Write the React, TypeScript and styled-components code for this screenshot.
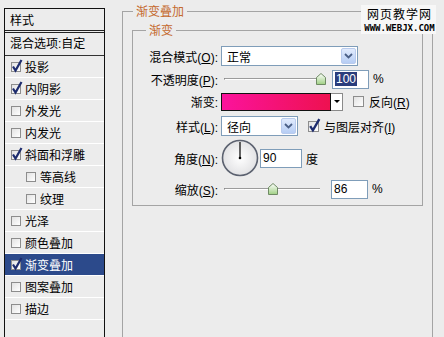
import React from "react";
import styled, { createGlobalStyle } from "styled-components";

const GlobalStyle = createGlobalStyle`
  html, body {
    margin: 0;
    padding: 0;
    background: #ececec;
  }
  body {
    width: 444px;
    height: 337px;
    overflow: hidden;
    font-family: "Liberation Sans", "Noto Sans CJK SC", sans-serif;
    font-size: 12px;
    color: #000;
  }
  * {
    box-sizing: border-box;
  }
`;

const Dialog = styled.div`
  position: relative;
  display: flex;
  align-items: flex-start;
  width: 444px;
  height: 337px;
  background: #ececec;
  overflow: hidden;
`;

/* ---------- left style list ---------- */

const StyleList = styled.div`
  margin: 8px 0 0 4px;
  width: 101px;
  height: 340px;
  border: 1px solid #111;
  border-bottom: none;
  display: flex;
  flex-direction: column;
  flex-shrink: 0;
`;

const ListTitle = styled.div`
  height: 24px;
  padding: 4px 0 0 5px;
  line-height: 17px;
  border-bottom: 3px double #222;
`;

const BlendRow = styled.div`
  height: 23px;
  line-height: 22px;
  padding-left: 5px;
  border-bottom: 1px solid #333;
`;

const ListRow = styled.div<{ $indent?: boolean; $active?: boolean }>`
  height: 22px;
  display: flex;
  align-items: center;
  gap: 4px;
  padding-left: ${(p) => (p.$indent ? 21 : 6)}px;
  border-bottom: 1px solid #fff;
  background: ${(p) => (p.$active ? "#2c4a8b" : "transparent")};
  color: ${(p) => (p.$active ? "#fff" : "#000")};
`;

const Box = styled.span<{ $size: number }>`
  position: relative;
  width: ${(p) => p.$size}px;
  height: ${(p) => p.$size}px;
  flex-shrink: 0;
  border: 1px solid #8d8d8d;
  background: linear-gradient(135deg, #e2e2e2, #fff);
  svg {
    position: absolute;
    left: -1px;
    top: -4px;
    overflow: visible;
  }
`;

const Check: React.FC<{ checked?: boolean; size?: number }> = ({ checked, size = 10 }) => (
  <Box $size={size}>
    {checked && (
      <svg width={size + 2} height={size + 4} viewBox="0 0 12 14">
        <path d="M2 7.5 L4.5 11.5 L10.5 1" fill="none" stroke="#1d2c6e" strokeWidth="2.2" />
      </svg>
    )}
  </Box>
);

/* ---------- group boxes ---------- */

const Group = styled.div<{ $grow?: boolean }>`
  display: flex;
  flex-direction: column;
  ${(p) => (p.$grow ? "flex: 1;" : "")}
`;

const GroupHead = styled.div<{ $lead: number }>`
  display: flex;
  align-items: center;
  height: 12px;
  &::before,
  &::after {
    content: "";
    align-self: flex-end;
    height: 6px;
    border-top: 1px solid #a4a4a4;
  }
  &::before {
    width: ${(p) => p.$lead}px;
    border-left: 1px solid #a4a4a4;
  }
  &::after {
    flex: 1;
    border-right: 1px solid #a4a4a4;
  }
`;

const Legend = styled.span`
  padding: 0 3px;
  line-height: 12px;
  color: #c4692e;
`;

const GroupBody = styled.div<{ $pad: string; $grow?: boolean }>`
  border: 1px solid #a4a4a4;
  border-top: none;
  padding: ${(p) => p.$pad};
  ${(p) => (p.$grow ? "flex: 1;" : "")}
`;

const OuterWrap = styled.div`
  margin: 6px 0 0 17px;
  width: 311px;
  height: 340px;
  display: flex;
  flex-direction: column;
`;

/* ---------- form rows ---------- */

const FormRow = styled.div<{ $h: number }>`
  display: grid;
  grid-template-columns: 85px auto;
  column-gap: 3px;
  align-items: center;
  height: ${(p) => p.$h}px;
`;

const Label = styled.span`
  text-align: right;
  white-space: nowrap;
  u {
    text-decoration: underline;
  }
`;

const Controls = styled.div`
  display: flex;
  align-items: center;
`;

const Select = styled.div<{ $w: number }>`
  width: ${(p) => p.$w}px;
  height: 20px;
  border: 1px solid #7f9db9;
  background: #fff;
  display: flex;
  align-items: center;
  justify-content: space-between;
  padding-left: 5px;
`;

const DropBtn = styled.span`
  width: 15px;
  height: 16px;
  margin-right: 1px;
  border: 1px solid #b9cbed;
  border-radius: 2px;
  background: linear-gradient(#e1ebfd, #b6cdf4);
  display: flex;
  align-items: center;
  justify-content: center;
`;

const Chevron = () => (
  <svg width="9" height="6" viewBox="0 0 9 6">
    <path d="M1 1 L4.5 4.5 L8 1" fill="none" stroke="#4a5f86" strokeWidth="1.8" />
  </svg>
);

const Slider = styled.div`
  position: relative;
  width: 106px;
  height: 16px;
`;

const Track = styled.div`
  position: absolute;
  left: 3px;
  right: 7px;
  top: 7px;
  height: 2px;
  border-top: 1px solid #9c9c9c;
  border-bottom: 1px solid #fff;
  border-left: 1px solid #777;
`;

const Thumb = styled.svg`
  position: absolute;
  top: 2px;
`;

const NumBox = styled.div<{ $w: number; $ml: number }>`
  width: ${(p) => p.$w}px;
  height: 19px;
  margin-left: ${(p) => p.$ml}px;
  border: 1px solid #7f9db9;
  background: #fff;
  padding-left: 2px;
  line-height: 17px;
`;

const Selected = styled.span`
  background: #2a3d7c;
  color: #fff;
  padding: 0 1px;
`;

const Unit = styled.span<{ $ml: number }>`
  margin-left: ${(p) => p.$ml}px;
`;

const Swatch = styled.div`
  display: flex;
  height: 18px;
`;

const SwatchFill = styled.div`
  width: 110px;
  border: 1px solid #111;
  background: linear-gradient(90deg, #fb139c, #ee1150);
`;

const SwatchArrow = styled.div`
  width: 12px;
  border: 1px solid #8a8a8a;
  border-left: none;
  background: #fff;
  display: flex;
  align-items: center;
  justify-content: center;
  &::after {
    content: "";
    border-left: 3px solid transparent;
    border-right: 3px solid transparent;
    border-top: 3px solid #000;
  }
`;

const CheckLabel = styled.label<{ $ml: number }>`
  display: flex;
  align-items: center;
  gap: 5px;
  margin-left: ${(p) => p.$ml}px;
`;

const Dial = () => (
  <svg width="38" height="38" viewBox="0 0 38 38">
    <defs>
      <radialGradient id="dg" cx="50%" cy="50%" r="50%">
        <stop offset="0%" stopColor="#ffffff" />
        <stop offset="100%" stopColor="#e2e2e4" />
      </radialGradient>
    </defs>
    <circle cx="19" cy="19" r="17.5" fill="url(#dg)" stroke="#5c6270" strokeWidth="1.6" />
    <line x1="19" y1="19" x2="19" y2="3" stroke="#000" strokeWidth="1.2" />
    <circle cx="19" cy="19" r="1.3" fill="#000" />
  </svg>
);

const Watermark = styled.div`
  position: absolute;
  top: 5px;
  left: 361px;
  width: 75px;
  padding: 0 0 1px 2px;
  background: #f7f7f7;
  text-align: center;
`;

const MarkTitle = styled.div`
  font-family: "Noto Sans CJK SC", sans-serif;
  font-size: 12px;
  line-height: 18px;
  letter-spacing: 1px;
`;

const MarkUrl = styled.div`
  font-family: "DejaVu Sans Mono", monospace;
  font-weight: bold;
  font-size: 9px;
  line-height: 10px;
`;

interface StyleItem {
  name: string;
  checked?: boolean;
  indent?: boolean;
  active?: boolean;
}

const styleItems: StyleItem[] = [
  { name: "投影", checked: true },
  { name: "内阴影", checked: true },
  { name: "外发光" },
  { name: "内发光" },
  { name: "斜面和浮雕", checked: true },
  { name: "等高线", indent: true },
  { name: "纹理", indent: true },
  { name: "光泽" },
  { name: "颜色叠加" },
  { name: "渐变叠加", checked: true, active: true },
  { name: "图案叠加" },
  { name: "描边" },
];

const ThumbIcon: React.FC<{ left: number }> = ({ left }) => (
  <Thumb width="10" height="12" viewBox="0 0 10 12" style={{ left }}>
    <defs>
      <linearGradient id="tg" x1="0" y1="0" x2="0" y2="1">
        <stop offset="0%" stopColor="#ffffff" />
        <stop offset="100%" stopColor="#9fd083" />
      </linearGradient>
    </defs>
    <path d="M5 0.5 L9.5 4.5 L9.5 11.5 L0.5 11.5 L0.5 4.5 Z" fill="url(#tg)" stroke="#6f8a64" />
  </Thumb>
);

const SliderBar: React.FC<{ value: number }> = ({ value }) => (
  <Slider>
    <Track />
    <ThumbIcon left={Math.round(value * 96) - 1} />
  </Slider>
);

const App: React.FC = () => {
  return (
    <Dialog>
      <GlobalStyle />
      <StyleList>
        <ListTitle>样式</ListTitle>
        <BlendRow>混合选项:自定</BlendRow>
        {styleItems.map((item) => (
          <ListRow key={item.name} $indent={item.indent} $active={item.active}>
            <Check checked={item.checked} />
            <span>{item.name}</span>
          </ListRow>
        ))}
      </StyleList>

      <OuterWrap>
        <Group $grow>
          <GroupHead $lead={10}>
            <Legend>渐变叠加</Legend>
          </GroupHead>
          <GroupBody $pad="7px 9px 0 9px" $grow>
            <Group>
              <GroupHead $lead={13}>
                <Legend>渐变</Legend>
              </GroupHead>
              <GroupBody $pad="7px 0 4px 0">
                <FormRow $h={24}>
                  <Label>
                    混合模式(<u>O</u>):
                  </Label>
                  <Controls>
                    <Select $w={137}>
                      <span>正常</span>
                      <DropBtn>
                        <Chevron />
                      </DropBtn>
                    </Select>
                  </Controls>
                </FormRow>
                <FormRow $h={22}>
                  <Label>
                    不透明度(<u>P</u>):
                  </Label>
                  <Controls>
                    <SliderBar value={1} />
                    <NumBox $w={37} $ml={5}>
                      <Selected>100</Selected>
                    </NumBox>
                    <Unit $ml={4}>%</Unit>
                  </Controls>
                </FormRow>
                <FormRow $h={23}>
                  <Label>渐变:</Label>
                  <Controls>
                    <Swatch>
                      <SwatchFill />
                      <SwatchArrow />
                    </Swatch>
                    <CheckLabel $ml={10}>
                      <Check size={11} />
                      <span>
                        反向(<u>R</u>)
                      </span>
                    </CheckLabel>
                  </Controls>
                </FormRow>
                <FormRow $h={26}>
                  <Label>
                    样式(<u>L</u>):
                  </Label>
                  <Controls>
                    <Select $w={77}>
                      <span>径向</span>
                      <DropBtn>
                        <Chevron />
                      </DropBtn>
                    </Select>
                    <CheckLabel $ml={10}>
                      <Check size={11} checked />
                      <span>
                        与图层对齐(<u>I</u>)
                      </span>
                    </CheckLabel>
                  </Controls>
                </FormRow>
                <FormRow $h={38}>
                  <Label>
                    角度(<u>N</u>):
                  </Label>
                  <Controls>
                    <Dial />
                    <NumBox $w={42} $ml={1}>
                      90
                    </NumBox>
                    <Unit $ml={4}>度</Unit>
                  </Controls>
                </FormRow>
                <FormRow $h={24}>
                  <Label>
                    缩放(<u>S</u>):
                  </Label>
                  <Controls>
                    <SliderBar value={0.5} />
                    <NumBox $w={37} $ml={4}>
                      86
                    </NumBox>
                    <Unit $ml={4}>%</Unit>
                  </Controls>
                </FormRow>
              </GroupBody>
            </Group>
          </GroupBody>
        </Group>
      </OuterWrap>

      <Watermark>
        <MarkTitle>网页教学网</MarkTitle>
        <MarkUrl>WWW.WEBJX.COM</MarkUrl>
      </Watermark>
    </Dialog>
  );
};

export default App;
